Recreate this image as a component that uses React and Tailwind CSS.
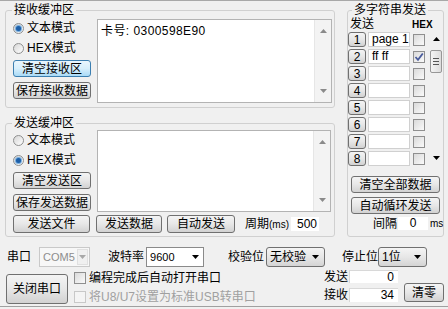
import React from 'react';

const Arrow = ({ up, color = '#000' }) => (
    <svg width="7" height="4" viewBox="0 0 7 4" className="shrink-0">
        <path d={up ? 'M0 4 L3.5 0 L7 4 Z' : 'M0 0 L7 0 L3.5 4 Z'} fill={color} />
    </svg>
);

const Btn = ({ children, className = '', blue }) => (
    <div
        className={`flex shrink-0 items-center justify-center rounded-[3px] border leading-none ${
            blue
                ? 'border-[#3c7fb1] bg-linear-to-b from-[#eaf6fd] via-[#d7effc] to-[#a9daf6]'
                : 'border-[#707070] bg-linear-to-b from-[#f4f4f4] via-[#e7e7e7] to-[#d2d2d2]'
        } ${className}`}
    >
        {children}
    </div>
);

const Radio = ({ checked, label, className = '' }) => (
    <div className={`flex h-[14px] items-center ${className}`}>
        <span className="flex h-[11px] w-[11px] shrink-0 items-center justify-center rounded-full border border-[#8e8f8f] bg-linear-to-br from-[#d6d6d6] to-white">
            {checked && <span className="h-[5px] w-[5px] rounded-full bg-[#1d5fa8] shadow-[0_0_1px_1px_#6aa6dd]" />}
        </span>
        <span className="ml-[3px]">{label}</span>
    </div>
);

const Check = ({ checked, disabled, className = '' }) => (
    <span
        className={`flex h-[12px] w-[12px] shrink-0 items-center justify-center border ${
            disabled ? 'border-[#c8c8c8] bg-[#f4f4f4]' : 'border-[#8f8f8f] bg-linear-to-br from-[#dadada] to-[#fafafa]'
        } ${className}`}
    >
        {checked && (
            <svg width="10" height="10" viewBox="0 0 10 10">
                <path d="M1.5 5 L4 7.8 L8.8 1.5" stroke="#4a5c9c" strokeWidth="1.8" fill="none" />
            </svg>
        )}
    </span>
);

const TextBox = ({ children, className = '' }) => (
    <div className={`flex border border-[#b3b3b3] bg-white ${className}`}>
        <div className="flex-1 overflow-hidden">{children}</div>
        <div className="flex w-[17px] flex-col items-center justify-between border-l border-[#e6e6e6] bg-[#f3f3f3] py-[9px]">
            <Arrow up color="#8a8a8a" />
            <Arrow color="#8a8a8a" />
        </div>
    </div>
);

const Group = ({ title, className = '', legendClass = 'ml-[6px]', children }) => (
    <fieldset className={`flex shrink-0 flex-col rounded-[3px] border border-[#d0d0d0] ${className}`}>
        <legend className={`px-[2px] leading-[14px] ${legendClass}`}>{title}</legend>
        {children}
    </fieldset>
);

const Combo = ({ value, className = '', kind }) => {
    if (kind === 'disabled') {
        return (
            <div className={`flex h-[20px] items-center border border-[#c9c9c9] bg-[#f7f7f7] pl-[3px] text-[11px] text-[#8d8d8d] ${className}`}>
                <span className="flex-1">{value}</span>
                <span className="mr-[1px] flex h-[16px] w-[11px] items-center justify-center border border-[#e0e0e0] bg-[#f0f0f0]">
                    <Arrow color="#a8a8a8" />
                </span>
            </div>
        );
    }
    if (kind === 'edit') {
        return (
            <div className={`flex h-[20px] items-center border border-[#8a8a8a] bg-white pl-[3px] pr-[4px] text-[11px] ${className}`}>
                <span className="flex-1">{value}</span>
                <Arrow />
            </div>
        );
    }
    return (
        <div className={`flex h-[20px] items-center rounded-[3px] border border-[#707070] bg-linear-to-b from-[#f4f4f4] via-[#e7e7e7] to-[#d4d4d4] pl-[3px] pr-[5px] ${className}`}>
            <span className="flex-1">{value}</span>
            <Arrow />
        </div>
    );
};

const rows = [
    { n: 1, text: 'page 1' },
    { n: 2, text: 'ff ff', hex: true },
    { n: 3 },
    { n: 4 },
    { n: 5 },
    { n: 6 },
    { n: 7 },
    { n: 8 },
];

export default function App() {
    return (
        <div className="flex h-[309px] w-[448px] flex-col overflow-hidden whitespace-nowrap border-t border-[#a8a8a8] bg-[#f0f0f0] font-['Liberation_Sans','Noto_Sans_CJK_SC',sans-serif] text-[12px] leading-[14px] text-black">
            <div className="flex pt-[2px]">
                {/* receive + send buffers */}
                <div className="ml-[5px] flex w-[330px] flex-col">
                    <Group title="接收缓冲区" className="h-[105px]">
                        <div className="flex pl-[7px]">
                            <div className="flex w-[78px] flex-col">
                                <Radio checked label="文本模式" className="mt-[4px]" />
                                <Radio label="HEX模式" className="mt-[6px]" />
                                <Btn blue className="mt-[5px] h-[17px]">清空接收区</Btn>
                                <Btn className="mt-[5px] h-[17px]">保存接收数据</Btn>
                            </div>
                            <TextBox className="ml-[6px] mt-[2px] h-[84px] w-[235px]">
                                <div className="pl-[3px] pt-[4px] tracking-[0.4px]">
                                    卡号:<span className="ml-[4px]">0300598E90</span>
                                </div>
                            </TextBox>
                        </div>
                    </Group>

                    <Group title="发送缓冲区" className="mt-[8px] h-[121px]">
                        <div className="flex flex-col pl-[7px]">
                            <div className="flex">
                                <div className="flex w-[78px] flex-col">
                                    <Radio label="文本模式" className="mt-[3px]" />
                                    <Radio checked label="HEX模式" className="mt-[6px]" />
                                    <Btn className="mt-[5px] h-[17px]">清空发送区</Btn>
                                    <Btn className="mt-[5px] h-[17px]">保存发送数据</Btn>
                                </div>
                                <TextBox className="ml-[6px] h-[82px] w-[234px]" />
                            </div>
                            <div className="mt-[3px] flex h-[18px] items-center">
                                <Btn className="h-[18px] w-[77px]">发送文件</Btn>
                                <Btn className="ml-[6px] h-[18px] w-[66px]">发送数据</Btn>
                                <Btn className="ml-[5px] h-[18px] w-[68px]">自动发送</Btn>
                                <span className="ml-[10px]">
                                    周期<span className="text-[10px]">(ms)</span>
                                </span>
                                <div className="ml-[2px] h-[14px] w-[28px] bg-white pr-[2px] text-right">500</div>
                            </div>
                        </div>
                    </Group>
                </div>

                {/* multi string send */}
                <Group title="多字符串发送" className="ml-[12px] h-[234px] w-[97px]" legendClass="ml-[4px]">
                    <div className="flex h-[14px] items-end">
                        <span className="ml-[2px]">发送</span>
                        <span className="ml-[38px] text-[10px] font-bold leading-[12px]">HEX</span>
                    </div>
                    <div className="mt-[1px] flex">
                        <div className="flex flex-col gap-[2px]">
                            {rows.map((r) => (
                                <div key={r.n} className="flex h-[15px] items-center">
                                    <Btn className="h-[15px] w-[18px]">{r.n}</Btn>
                                    <div className="ml-[2px] h-[15px] w-[42px] overflow-hidden border border-[#d0d0d0] bg-white pl-[3px] leading-[13px]">
                                        {r.text}
                                    </div>
                                    <Check checked={r.hex} className="ml-[3px]" />
                                </div>
                            ))}
                        </div>
                        <div className="ml-[5px] flex h-[134px] w-[12px] flex-col items-center">
                            <div className="mt-[5px]">
                                <Arrow up />
                            </div>
                            <div className="mt-[9px] flex h-[23px] w-[12px] flex-col items-center justify-center gap-[2px] rounded-[2px] border border-[#979797] bg-linear-to-r from-[#f4f4f4] to-[#dcdcdc]">
                                <span className="h-px w-[6px] bg-[#555]" />
                                <span className="h-px w-[6px] bg-[#555]" />
                                <span className="h-px w-[6px] bg-[#555]" />
                            </div>
                            <div className="mb-[6px] mt-auto">
                                <Arrow />
                            </div>
                        </div>
                    </div>
                    <Btn className="ml-[3px] mt-[10px] h-[17px] w-[89px]">清空全部数据</Btn>
                    <Btn className="ml-[3px] mt-[4px] h-[17px] w-[89px]">自动循环发送</Btn>
                    <div className="mt-[3px] flex h-[13px] items-center">
                        <span className="ml-[25px] shrink-0">间隔</span>
                        <div className="ml-[1px] h-[13px] w-[30px] shrink-0 bg-white text-center leading-[13px]">0</div>
                        <span className="ml-[2px] shrink-0 text-[10px]">ms</span>
                    </div>
                </Group>
            </div>

            {/* serial settings */}
            <div className="mt-[10px] flex h-[20px] items-center">
                <span className="ml-[7px]">串口</span>
                <Combo kind="disabled" value="COM5" className="ml-[8px] w-[51px]" />
                <span className="ml-[18px]">波特率</span>
                <Combo kind="edit" value="9600" className="ml-[2px] w-[58px]" />
                <span className="ml-[24px]">校验位</span>
                <Combo value="无校验" className="ml-[2px] w-[59px]" />
                <span className="ml-[17px]">停止位</span>
                <Combo value="1位" className="w-[49px]" />
            </div>

            <div className="mt-[3px] flex">
                <Btn className="ml-[6px] mt-[4px] h-[30px] w-[62px]">关闭串口</Btn>
                <div className="ml-[6px] flex w-[244px] flex-col">
                    <div className="mt-[1px] flex h-[14px] items-center">
                        <Check />
                        <span className="ml-[3px]">编程完成后自动打开串口</span>
                    </div>
                    <div className="mt-[5px] flex h-[14px] items-center text-[#a0a0a0]">
                        <Check disabled />
                        <span className="ml-[3px]">将U8/U7设置为标准USB转串口</span>
                    </div>
                </div>
                <div className="ml-[6px] flex flex-col">
                    <div className="flex h-[13px] items-center">
                        <span>发送</span>
                        <div className="ml-[1px] h-[13px] w-[49px] border-t border-l border-[#d8d8d8] bg-white pr-[4px] text-right leading-[12px]">0</div>
                    </div>
                    <div className="mt-[5px] flex h-[14px] items-center">
                        <span>接收</span>
                        <div className="ml-[1px] h-[14px] w-[49px] border-t border-l border-[#d8d8d8] bg-white pr-[4px] text-right leading-[13px]">34</div>
                    </div>
                </div>
                <Btn className="ml-[6px] mt-[13px] h-[19px] w-[40px]">清零</Btn>
            </div>

            <div className="mb-[2px] mt-auto h-px bg-[#a0a0a0]" />
        </div>
    );
}
